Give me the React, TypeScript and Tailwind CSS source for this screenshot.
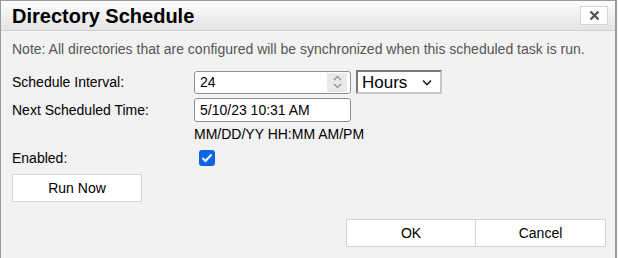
import React from "react";

export default function App() {
  return (
    <div className="w-[618px] h-[258px] bg-white" style={{ fontFamily: '"Liberation Sans", Arial, sans-serif' }}>
      <div className="w-[617px] h-[258px] border border-[#9a9a9a] border-r-2 border-b-0 bg-[#f2f2f2] flex flex-col">
        <div className="h-[30px] shrink-0 flex items-center justify-between pl-[11px] pr-[7px] bg-gradient-to-b from-[#fdfdfd] to-[#e4e4e4] border-b border-[#d0d0d0]">
          <span className="text-[20px] font-bold text-black leading-none">Directory Schedule</span>
          <button className="w-[28px] h-[19px] bg-white border border-[#d6d6d6] flex items-center justify-center">
            <svg width="11" height="11" viewBox="0 0 11 11">
              <path d="M1.5 1.5 L9.5 9.5 M9.5 1.5 L1.5 9.5" stroke="#555" strokeWidth="2.4" />
            </svg>
          </button>
        </div>
        <div className="px-[11px] pt-[10px] text-[14px] text-[#555] leading-[16px]">
          Note: All directories that are configured will be synchronized when this scheduled task is run.
        </div>
        <div className="px-[11px] mt-[13px] text-[14px] text-black">
          <div className="flex items-center h-[24px]">
            <span className="w-[182px]">Schedule Interval:</span>
            <div className="w-[157px] h-[23px] bg-white border border-[#8f8f8f] rounded-[3px] flex items-center pl-[5px] pr-[3px]">
              <span className="flex-1">24</span>
              <div className="w-[20px] h-[19px] bg-[#e9e9ed] flex flex-col items-center justify-center">
                <svg width="9" height="14" viewBox="0 0 9 14">
                  <path d="M1 5 L4.5 1.5 L8 5 M1 9 L4.5 12.5 L8 9" stroke="#888" strokeWidth="1.1" fill="none" />
                </svg>
              </div>
            </div>
            <div className="ml-[5px] w-[86px] h-[24px] bg-white border-2 border-[#7a7a7a] border-r-[#c8c8c8] border-b-[#c8c8c8] flex items-center pl-[4px] pr-[8px]">
              <span className="flex-1 text-[17px] leading-none">Hours</span>
              <svg width="10" height="7" viewBox="0 0 10 7">
                <path d="M1 1.5 L5 5.5 L9 1.5" stroke="#222" strokeWidth="1.6" fill="none" />
              </svg>
            </div>
          </div>
          <div className="flex items-center h-[24px] mt-[4px]">
            <span className="w-[182px]">Next Scheduled Time:</span>
            <div className="w-[157px] h-[24px] bg-white border border-[#8f8f8f] rounded-[3px] flex items-center pl-[5px]">
              5/10/23 10:31 AM
            </div>
          </div>
          <div className="pl-[182px] mt-[3px] leading-[18px]">MM/DD/YY HH:MM AM/PM</div>
          <div className="flex items-center h-[20px] mt-[5px]">
            <span className="w-[187px]">Enabled:</span>
            <div className="w-[16px] h-[16px] rounded-[3px] bg-[#0b63e5] flex items-center justify-center">
              <svg width="12" height="10" viewBox="0 0 12 10">
                <path d="M1.5 5 L4.5 8 L10.5 1.5" stroke="white" strokeWidth="2" fill="none" />
              </svg>
            </div>
          </div>
          <button className="mt-[6px] w-[130px] h-[28px] bg-white border border-[#d4d4d4] text-[14px] text-black">Run Now</button>
        </div>
        <div className="flex justify-end pr-[9px] mt-[17px]">
          <button className="w-[130px] h-[28px] bg-white border border-[#d4d4d4] text-[14px] text-black">OK</button>
          <button className="w-[130px] h-[28px] bg-white border border-[#d4d4d4] border-l-0 text-[14px] text-black">Cancel</button>
        </div>
      </div>
    </div>
  );
}
